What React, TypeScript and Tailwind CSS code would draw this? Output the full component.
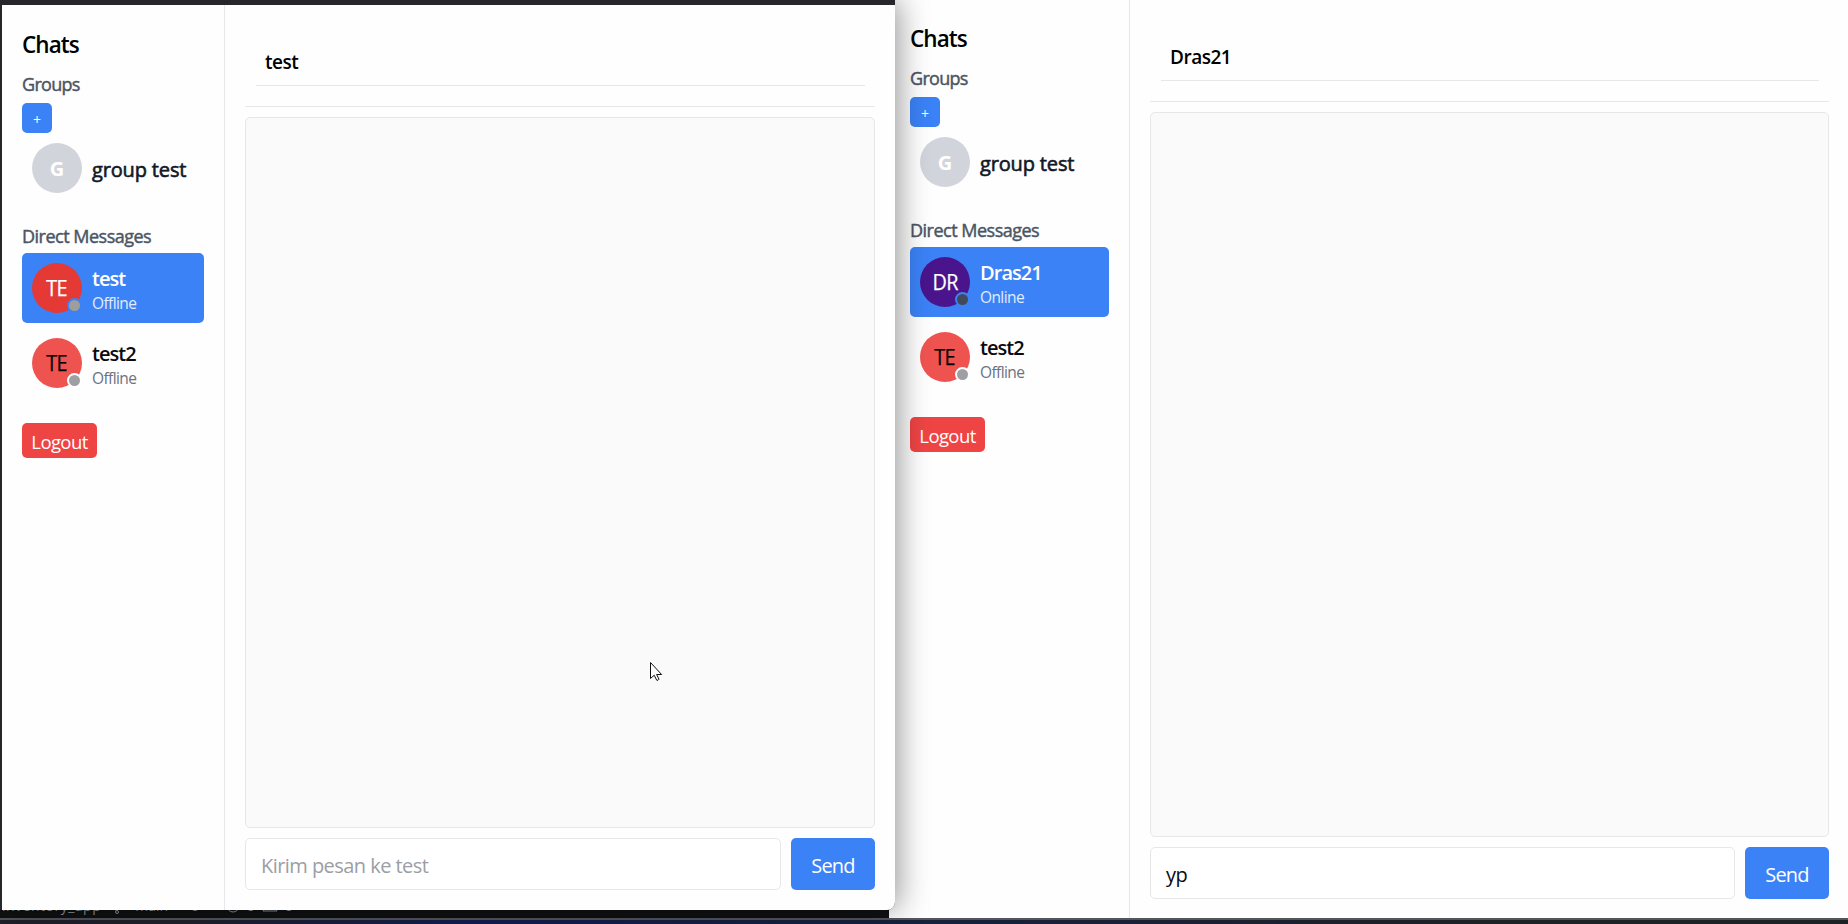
import React from "react";

type Contact = { name: string; initials: string; status: string; avatar: string; dot: string; selected?: boolean };

const groupTitle = "text-[18px] leading-[24px] text-[#4b5563] [-webkit-text-stroke:0.45px_#4b5563]";

function ContactRow({ c }: { c: Contact }) {
  return (
    <div className={`flex h-[70px] items-center gap-[10px] rounded-[5px] px-[10px] ${c.selected ? "bg-[#3b82f6]" : ""}`}>
      <div className={`relative flex size-[50px] shrink-0 items-center justify-center rounded-full text-[22px] ${c.avatar}`}>
        <span className="-mt-px scale-x-[0.9] tracking-[-0.5px] [-webkit-text-stroke:0.25px_currentColor]">{c.initials}</span>
        <span className={`absolute right-0 bottom-0 size-[15px] rounded-full border-2 ${c.dot}`} />
      </div>
      <div className="flex flex-col pt-0.5">
        <span className={`text-[20px] leading-[28px] font-semibold tracking-[-0.95px] ${c.selected ? "text-white" : "text-[#0a0a12]"}`}>{c.name}</span>
        <span className={`text-[15.5px] leading-[20px] tracking-[-0.6px] ${c.selected ? "text-[#e0edff]" : "text-[#6b7280]"}`}>{c.status}</span>
      </div>
    </div>
  );
}

function Sidebar({ contacts, className }: { contacts: Contact[]; className: string }) {
  return (
    <aside className={`flex shrink-0 flex-col items-start border-r border-[#e5e7eb] pr-5 ${className}`}>
      <h1 className="pt-[2px] text-[22.5px] leading-[30px] font-semibold tracking-[-0.95px] text-black">Chats</h1>
      <h2 className={`mt-[12px] tracking-[-0.7px] ${groupTitle}`}>Groups</h2>
      <button className="mt-[7px] flex size-[30px] items-center justify-center rounded-[5px] bg-[#3b82f6] pt-[3px] text-[14px] text-white">+</button>
      <div className="flex h-[70px] items-center gap-[10px] px-[10px]">
        <div className="flex size-[50px] items-center justify-center rounded-full bg-[#d1d5db] pt-px text-[20px] font-bold text-white">G</div>
        <span className="pt-[3px] text-[20px] tracking-[-0.15px] text-[#111827] [-webkit-text-stroke:0.6px_#111827]">group test</span>
      </div>
      <h2 className={`mt-[21px] tracking-[-0.5px] ${groupTitle}`}>Direct Messages</h2>
      <div className="mt-[5px] flex w-full flex-col gap-[5px]">
        {contacts.map((c) => (
          <ContactRow key={c.name} c={c} />
        ))}
      </div>
      <button className="mt-[25px] flex h-[35px] w-[75px] items-center justify-center rounded-[5px] bg-[#ef4444] pt-[2px] text-[18.5px] tracking-[-0.6px] text-white">Logout</button>
    </aside>
  );
}

function Chat({ title, children, className }: { title: string; children: React.ReactNode; className: string }) {
  return (
    <main className={`flex min-w-0 flex-1 flex-col pl-5 ${className}`}>
      <header className="border-b border-[#e5e7eb] pr-[10px] pl-[11px] pb-5">
        <h2 className="flex h-[44px] items-center border-b border-[#e5e7eb] px-[9px] pb-[3px] text-[19px] font-semibold tracking-[-0.5px] text-black">{title}</h2>
      </header>
      <section className="mt-[10px] min-h-0 flex-1 rounded-[5px] border border-[#e5e7eb] bg-[#fafafa]" />
      <footer className="mt-[10px] flex h-[52px] gap-[10px]">
        <div className="flex flex-1 items-center rounded-[5px] border border-[#e5e7eb] bg-white px-[15px] pt-[3px] text-[20px] tracking-[-0.55px]">{children}</div>
        <button className="flex w-[84px] items-center justify-center rounded-[5px] bg-[#3b82f6] pt-[3px] text-[20px] tracking-[-0.8px] text-white">Send</button>
      </footer>
    </main>
  );
}

const test2: Contact = { name: "test2", initials: "TE", status: "Offline", avatar: "bg-[#ef5350] text-black", dot: "border-white bg-[#9e9fa3]" };
const left: Contact[] = [
  { name: "test", initials: "TE", status: "Offline", avatar: "bg-[#e53935] text-white", dot: "border-[#3b82f6] bg-[#9e9e9e]", selected: true },
  test2,
];
const right: Contact[] = [
  { name: "Dras21", initials: "DR", status: "Online", avatar: "bg-[#4a148c] text-white", dot: "border-[#3b82f6] bg-[#424a59]", selected: true },
  test2,
];

export default function App() {
  return (
    <div className="relative h-[924px] w-[1848px] overflow-hidden bg-[#0f1112] font-['Open_Sans','Noto_Sans',sans-serif]">
      <div className="flex h-[918px] items-end justify-between">
        <div className="flex h-[24px] items-end gap-[13px] pb-[2px] pl-[2px] text-[14px] leading-[20px] whitespace-nowrap text-[#8a8f94]">
          <span className="tracking-[0.5px]">inventory_app</span>
          <svg width="8" height="16" viewBox="0 0 8 16" fill="none" stroke="currentColor">
            <circle cx="2" cy="3" r="1.5" />
            <circle cx="6" cy="5" r="1.5" />
            <circle cx="3" cy="12" r="1.5" />
            <path d="M2 5v6M6 7c0 3-3 2-3 4" />
          </svg>
          <span>main*</span>
          <svg width="12" height="16" viewBox="0 0 12 16" fill="none" stroke="currentColor">
            <circle cx="6" cy="6" r="4.5" />
          </svg>
          <svg className="ml-[12px]" width="14" height="16" viewBox="0 0 14 16" fill="none" stroke="currentColor">
            <circle cx="7" cy="6" r="6" />
          </svg>
          <span className="-mx-[6px]">0</span>
          <svg width="16" height="16" viewBox="0 0 16 16" fill="none" stroke="currentColor">
            <path d="M8 0l7 11H1z" />
          </svg>
          <span className="-ml-[6px]">0</span>
        </div>
        <div className="flex h-full w-[959px] bg-[#fefefe] pl-[21px]">
          <Sidebar contacts={right} className="w-[220px] pt-[22px]" />
          <Chat title="Dras21" className="pt-[37px] pr-[19px] pb-[19px]">
            <span className="text-[#0a0a14]">yp</span>
          </Chat>
        </div>
      </div>
      <div className="h-[6px] border-t-2 border-[#55565c] bg-linear-to-r from-[#1f202b] from-10% via-[#141d50] via-25% to-[#1c2126] to-80%" />
      <div className="absolute top-0 left-0 h-[910px] w-[895px] rounded-br-[8px] bg-[#26262b] pt-[5px] pl-[2px] shadow-[4px_0_30px_rgba(0,0,0,0.4)]">
        <div className="flex h-full rounded-br-[8px] bg-[#fefefe] pl-5">
          <Sidebar contacts={left} className="w-[203px] pt-[23px]" />
          <Chat title="test" className="pt-[37px] pr-5 pb-5">
            <span className="text-[#9b9ea4]">Kirim pesan ke test</span>
          </Chat>
        </div>
      </div>
      <svg className="absolute top-[661px] left-[649px]" width="15" height="22" viewBox="0 0 15 22">
        <path d="M1.5 1.5v16l3.7-3.3 2.5 5q1.4.6 2.3-1l-2.4-4.7h5z" fill="white" stroke="#111118" strokeWidth="1" />
      </svg>
    </div>
  );
}
